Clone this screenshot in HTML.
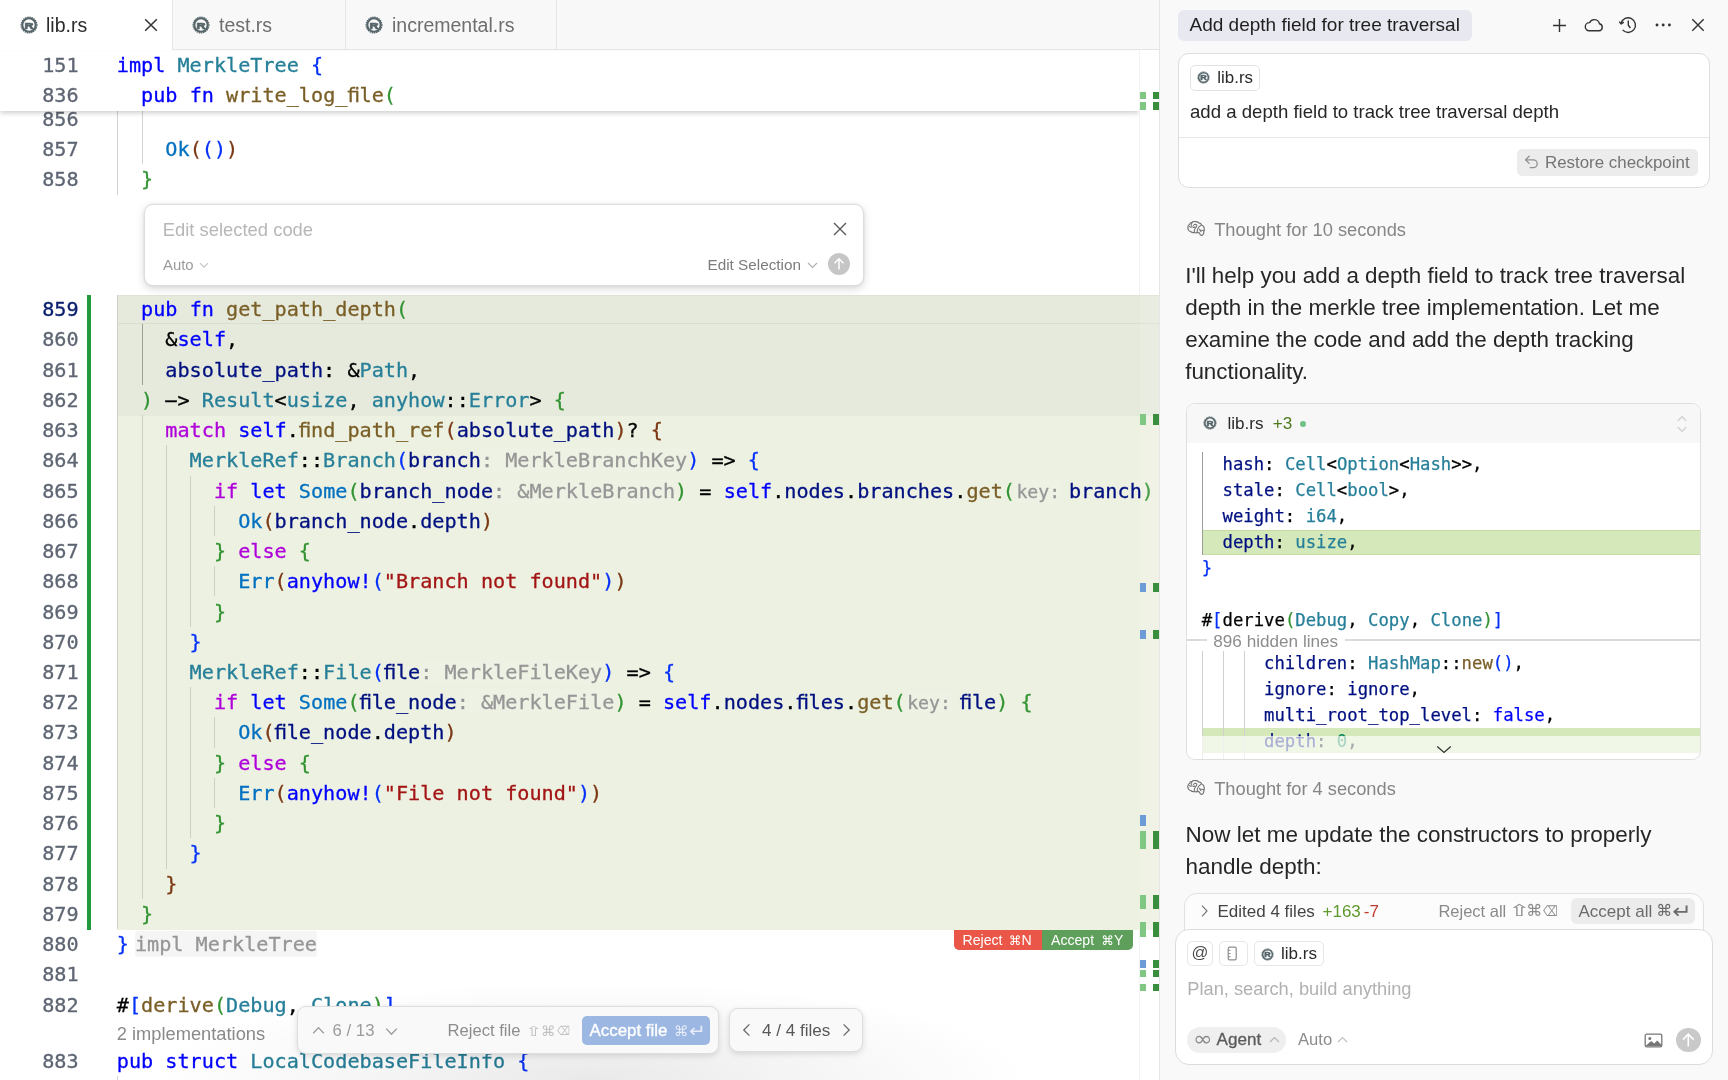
<!DOCTYPE html>
<html lang="en">
<head>
<meta charset="utf-8">
<title>lib.rs</title>
<style>
*{box-sizing:border-box;margin:0;padding:0}
html,body{width:1728px;height:1080px;overflow:hidden;background:#fff}
body{font-family:"Liberation Sans",Arial,sans-serif;color:#222;position:relative}
.abs{position:absolute}
#editor,#panel{will-change:transform}
#editor{position:absolute;left:0;top:0;width:1160px;height:1080px;background:#fff;overflow:hidden;border-right:1px solid #e6e6e6}
#tabs{position:absolute;left:0;top:0;width:1160px;height:50px;background:#f8f8f8;border-bottom:1px solid #e4e4e4}
.tab{position:absolute;top:0;height:49px;border-right:1px solid #e6e6e6;font-size:19.5px;color:#6e6e6e;line-height:50px;white-space:nowrap}
.tab.active{background:#fff;height:49.6px;color:#2b2b2b}
.tab .lbl{position:absolute;top:0}
.mono{font-family:"DejaVu Sans Mono","Liberation Mono",monospace}
.cl{font-feature-settings:"dlig" 1;-webkit-text-stroke:0.3px;position:absolute;left:0;width:1139px;height:30.24px;line-height:30.24px;font-size:20.16px;white-space:pre;font-family:"DejaVu Sans Mono","Liberation Mono",monospace;color:#000}
.ln{position:absolute;left:0;width:78.6px;text-align:right;color:#5f6673}
.ln.cur{color:#0b216f}
.code{position:absolute;left:116.8px;top:0}
.k{color:#0000ff}.c{color:#af00db}.t{color:#267f99}.f{color:#795e26}.v{color:#001080}.s{color:#a31515}.e{color:#0070c1}.n{color:#098658}
.b1{color:#0431fa}.b2{color:#319331}.b3{color:#7b3814}
.h{color:#969696;background:rgba(255,255,255,.1);padding:0;border-radius:3px}
.hp{color:#969696;background:rgba(255,255,255,.1);font-size:18.14px;padding:1px 1.5px;margin:0 7.4px 0 0;border-radius:4px}
.hb{color:#969696;background:#f5f5f5;padding:1px 0;margin-left:6px;border-radius:3px}
.ig{position:absolute;width:1px;background:#d3d3d3}
.om{position:absolute;width:6.5px}
.pc{position:absolute;left:14.4px;height:25.92px;line-height:25.92px;font-size:17.28px;white-space:pre;font-family:"DejaVu Sans Mono","Liberation Mono",monospace;color:#000;font-feature-settings:"dlig" 1;-webkit-text-stroke:0.25px}
.ar{display:inline-block;transform:scaleX(2.14);transform-origin:6.09px 50%}
.sym{font-family:"DejaVu Sans","Liberation Sans",sans-serif}
</style>
</head>
<body>
<div id="editor">
<div class="abs" style="left:116.8px;top:295.2px;width:1043px;height:634.7px;background:#edf1e1"></div>
<div class="abs" style="left:116.8px;top:295.2px;width:1043px;height:120.7px;background:#e6eadc"></div>
<div class="abs" style="left:116.8px;top:295.2px;width:1043px;height:29.2px;border-top:1px solid #dfe3d5;border-bottom:1px solid #dadecf"></div>
<div class="abs" style="left:86.5px;top:295px;width:4px;height:634.5px;background:#219a3d"></div>
<div class="ig" style="left:117.3px;top:103.92px;height:90.72px;background:#d3d3d3"></div>
<div class="ig" style="left:141.6px;top:103.92px;height:60.48px;background:#d3d3d3"></div>
<div class="ig" style="left:117.3px;top:295.20px;height:633.94px;background:#cdd0c4"></div>
<div class="ig" style="left:141.6px;top:324.34px;height:60.48px;background:#9da094"></div>
<div class="ig" style="left:141.6px;top:415.06px;height:483.84px;background:#cdd0c4"></div>
<div class="ig" style="left:165.8px;top:445.30px;height:423.36px;background:#cdd0c4"></div>
<div class="ig" style="left:190.1px;top:475.54px;height:151.20px;background:#cdd0c4"></div>
<div class="ig" style="left:214.4px;top:505.78px;height:30.24px;background:#cdd0c4"></div>
<div class="ig" style="left:214.4px;top:566.26px;height:30.24px;background:#cdd0c4"></div>
<div class="ig" style="left:190.1px;top:687.22px;height:151.20px;background:#cdd0c4"></div>
<div class="ig" style="left:214.4px;top:717.46px;height:30.24px;background:#cdd0c4"></div>
<div class="ig" style="left:214.4px;top:777.94px;height:30.24px;background:#cdd0c4"></div>
<div class="cl" style="top:103.92px"><span class="ln">856</span><span class="code"></span></div>
<div class="cl" style="top:134.16px"><span class="ln">857</span><span class="code">    <span class="e">Ok</span><span class="b3">(</span><span class="b1">()</span><span class="b3">)</span></span></div>
<div class="cl" style="top:164.40px"><span class="ln">858</span><span class="code">  <span class="b2">}</span></span></div>
<div class="cl" style="top:294.10px"><span class="ln cur">859</span><span class="code">  <span class="k">pub</span> <span class="k">fn</span> <span class="f">get_path_depth</span><span class="b2">(</span></span></div>
<div class="cl" style="top:324.34px"><span class="ln">860</span><span class="code">    &amp;<span class="k">self</span>,</span></div>
<div class="cl" style="top:354.58px"><span class="ln">861</span><span class="code">    <span class="v">absolute_path</span>: &amp;<span class="t">Path</span>,</span></div>
<div class="cl" style="top:384.82px"><span class="ln">862</span><span class="code">  <span class="b2">)</span> <span class="ar">-</span>&gt; <span class="t">Result</span>&lt;<span class="t">usize</span>, <span class="t">anyhow</span>::<span class="t">Error</span>&gt; <span class="b2">{</span></span></div>
<div class="cl" style="top:415.06px"><span class="ln">863</span><span class="code">    <span class="c">match</span> <span class="k">self</span>.<span class="f">find_path_ref</span><span class="b3">(</span><span class="v">absolute_path</span><span class="b3">)</span>? <span class="b3">{</span></span></div>
<div class="cl" style="top:445.30px"><span class="ln">864</span><span class="code">      <span class="t">MerkleRef</span>::<span class="t">Branch</span><span class="b1">(</span><span class="v">branch</span><span class="h">: MerkleBranchKey</span><span class="b1">)</span> =&gt; <span class="b1">{</span></span></div>
<div class="cl" style="top:475.54px"><span class="ln">865</span><span class="code">        <span class="c">if</span> <span class="k">let</span> <span class="e">Some</span><span class="b2">(</span><span class="v">branch_node</span><span class="h">: &amp;MerkleBranch</span><span class="b2">)</span> = <span class="k">self</span>.<span class="v">nodes</span>.<span class="v">branches</span>.<span class="f">get</span><span class="b2">(</span><span class="hp">key:</span><span class="v">branch</span><span class="b2">)</span> <span class="b2">{</span></span></div>
<div class="cl" style="top:505.78px"><span class="ln">866</span><span class="code">          <span class="e">Ok</span><span class="b3">(</span><span class="v">branch_node</span>.<span class="v">depth</span><span class="b3">)</span></span></div>
<div class="cl" style="top:536.02px"><span class="ln">867</span><span class="code">        <span class="b2">}</span> <span class="c">else</span> <span class="b2">{</span></span></div>
<div class="cl" style="top:566.26px"><span class="ln">868</span><span class="code">          <span class="e">Err</span><span class="b3">(</span><span class="k">anyhow!</span><span class="b1">(</span><span class="s">"Branch not found"</span><span class="b1">)</span><span class="b3">)</span></span></div>
<div class="cl" style="top:596.50px"><span class="ln">869</span><span class="code">        <span class="b2">}</span></span></div>
<div class="cl" style="top:626.74px"><span class="ln">870</span><span class="code">      <span class="b1">}</span></span></div>
<div class="cl" style="top:656.98px"><span class="ln">871</span><span class="code">      <span class="t">MerkleRef</span>::<span class="t">File</span><span class="b1">(</span><span class="v">file</span><span class="h">: MerkleFileKey</span><span class="b1">)</span> =&gt; <span class="b1">{</span></span></div>
<div class="cl" style="top:687.22px"><span class="ln">872</span><span class="code">        <span class="c">if</span> <span class="k">let</span> <span class="e">Some</span><span class="b2">(</span><span class="v">file_node</span><span class="h">: &amp;MerkleFile</span><span class="b2">)</span> = <span class="k">self</span>.<span class="v">nodes</span>.<span class="v">files</span>.<span class="f">get</span><span class="b2">(</span><span class="hp">key:</span><span class="v">file</span><span class="b2">)</span> <span class="b2">{</span></span></div>
<div class="cl" style="top:717.46px"><span class="ln">873</span><span class="code">          <span class="e">Ok</span><span class="b3">(</span><span class="v">file_node</span>.<span class="v">depth</span><span class="b3">)</span></span></div>
<div class="cl" style="top:747.70px"><span class="ln">874</span><span class="code">        <span class="b2">}</span> <span class="c">else</span> <span class="b2">{</span></span></div>
<div class="cl" style="top:777.94px"><span class="ln">875</span><span class="code">          <span class="e">Err</span><span class="b3">(</span><span class="k">anyhow!</span><span class="b1">(</span><span class="s">"File not found"</span><span class="b1">)</span><span class="b3">)</span></span></div>
<div class="cl" style="top:808.18px"><span class="ln">876</span><span class="code">        <span class="b2">}</span></span></div>
<div class="cl" style="top:838.42px"><span class="ln">877</span><span class="code">      <span class="b1">}</span></span></div>
<div class="cl" style="top:868.66px"><span class="ln">878</span><span class="code">    <span class="b3">}</span></span></div>
<div class="cl" style="top:898.90px"><span class="ln">879</span><span class="code">  <span class="b2">}</span></span></div>
<div class="cl" style="top:929.14px"><span class="ln">880</span><span class="code"><span class="b1">}</span><span class="hb">impl MerkleTree</span></span></div>
<div class="cl" style="top:959.38px"><span class="ln">881</span><span class="code"></span></div>
<div class="cl" style="top:989.62px"><span class="ln">882</span><span class="code">#<span class="b1">[</span><span class="f">derive</span><span class="b2">(</span><span class="t">Debug</span>, <span class="t">Clone</span><span class="b2">)</span><span class="b1">]</span></span></div>
<div class="abs" style="left:116.8px;top:1020.6px;font-size:18.3px;color:#8a8a8a;line-height:26px;white-space:nowrap">2 implementations</div>
<div class="cl" style="top:1045.95px"><span class="ln">883</span><span class="code"><span class="k">pub</span> <span class="k">struct</span> <span class="t">LocalCodebaseFileInfo</span> <span class="b1">{</span></span></div>
<div class="ig" style="left:117.3px;top:1076.2px;height:4px"></div>
<div class="abs" style="left:0;top:50.4px;width:1139px;height:60.8px;background:#fff;box-shadow:0 2px 5px rgba(0,0,0,.2);clip-path:inset(0 0 -12px 0)"></div>
<div class="cl" style="top:50.4px"><span class="ln">151</span><span class="code"><span class="k">impl</span> <span class="t">MerkleTree</span> <span class="b1">{</span></span></div>
<div class="cl" style="top:80.0px"><span class="ln">836</span><span class="code">  <span class="k">pub</span> <span class="k">fn</span> <span class="f">write_log_file</span><span class="b2">(</span></span></div>
<div class="abs" style="left:1139px;top:50px;width:1px;height:245px;background:rgba(0,0,0,.05)"></div>
<div class="abs" style="left:1139px;top:930px;width:1px;height:150px;background:rgba(0,0,0,.05)"></div>
<div class="abs" style="left:1139.5px;top:295.2px;width:20px;height:634.7px;background:rgba(255,255,255,.12)"></div>
<div class="om" style="left:1139.5px;top:91.6px;height:7.4px;background:#81c784"></div>
<div class="om" style="left:1152.5px;top:91.6px;height:7.4px;background:#388e3c"></div>
<div class="om" style="left:1139.5px;top:102.2px;height:7.8px;background:#81c784"></div>
<div class="om" style="left:1152.5px;top:102.2px;height:7.8px;background:#388e3c"></div>
<div class="om" style="left:1139.5px;top:414.0px;height:11.0px;background:#81c784"></div>
<div class="om" style="left:1152.5px;top:414.0px;height:11.0px;background:#388e3c"></div>
<div class="om" style="left:1139.5px;top:583.0px;height:9.0px;background:#6c9bd6"></div>
<div class="om" style="left:1152.5px;top:583.0px;height:9.0px;background:#388e3c"></div>
<div class="om" style="left:1139.5px;top:630.0px;height:9.0px;background:#6c9bd6"></div>
<div class="om" style="left:1152.5px;top:630.0px;height:9.0px;background:#388e3c"></div>
<div class="om" style="left:1139.5px;top:815.0px;height:11.0px;background:#6c9bd6"></div>
<div class="om" style="left:1139.5px;top:831.0px;height:18.0px;background:#81c784"></div>
<div class="om" style="left:1152.5px;top:831.0px;height:18.0px;background:#388e3c"></div>
<div class="om" style="left:1139.5px;top:895.0px;height:14.0px;background:#81c784"></div>
<div class="om" style="left:1152.5px;top:895.0px;height:14.0px;background:#388e3c"></div>
<div class="om" style="left:1139.5px;top:922.0px;height:15.0px;background:#81c784"></div>
<div class="om" style="left:1152.5px;top:922.0px;height:15.0px;background:#388e3c"></div>
<div class="om" style="left:1139.5px;top:960.0px;height:8.0px;background:#6c9bd6"></div>
<div class="om" style="left:1152.5px;top:960.0px;height:8.0px;background:#388e3c"></div>
<div class="om" style="left:1139.5px;top:970.0px;height:7.0px;background:#81c784"></div>
<div class="om" style="left:1152.5px;top:970.0px;height:7.0px;background:#388e3c"></div>
<div class="om" style="left:1139.5px;top:984.0px;height:7.0px;background:#81c784"></div>
<div class="om" style="left:1152.5px;top:984.0px;height:7.0px;background:#388e3c"></div>
<!-- inline edit box -->
<div class="abs" style="left:144.4px;top:204.4px;width:719.4px;height:82px;background:#fff;border:1px solid #dedede;border-radius:9px;box-shadow:0 3px 9px rgba(0,0,0,.15),0 0 3px rgba(0,0,0,.08)">
  <div class="abs" style="left:17.4px;top:11.6px;font-size:18.4px;line-height:26px;color:#b7b7b7;white-space:nowrap">Edit selected code</div>
  <svg class="abs" style="left:687.6px;top:16.6px" width="14" height="14" viewBox="0 0 14 14"><path d="M1 1 L13 13 M13 1 L1 13" stroke="#5a5a5a" stroke-width="1.4" fill="none"/></svg>
  <div class="abs" style="left:17.6px;top:49.6px;font-size:14.9px;line-height:20px;color:#9a9a9a;white-space:nowrap">Auto</div>
  <svg class="abs" style="left:53.6px;top:56.6px" width="10" height="7" viewBox="0 0 10 7"><path d="M1 1.2 L5 5.2 L9 1.2" stroke="#c4c4c4" stroke-width="1.2" fill="none"/></svg>
  <div class="abs" style="left:562.1px;top:49.6px;font-size:15.3px;line-height:20px;color:#7c7c7c;white-space:nowrap">Edit Selection</div>
  <svg class="abs" style="left:662.1px;top:56.6px" width="11" height="7" viewBox="0 0 11 7"><path d="M1 1 L5.5 5.5 L10 1" stroke="#b0b0b0" stroke-width="1.2" fill="none"/></svg>
  <div class="abs" style="left:682.6px;top:47.6px;width:22px;height:22px;border-radius:11px;background:#c6c6c6">
    <svg class="abs" style="left:0;top:0" width="22" height="22" viewBox="0 0 22 22"><path d="M11 16.5 V6 M6.5 10.3 L11 5.8 L15.5 10.3" stroke="#fff" stroke-width="1.5" fill="none"/></svg>
  </div>
</div>

<!-- reject / accept hunk -->
<div class="abs" style="left:953.5px;top:929.8px;width:88.5px;height:20.5px;background:#ea5648;border-radius:0 0 0 5px;color:#fff;font-size:14.1px;line-height:20px;white-space:nowrap"><span class="abs" style="left:9px;top:0">Reject</span><span class="abs" style="left:55.5px;top:0"><span class="sym" style="font-size:12.5px">⌘</span>N</span></div>
<div class="abs" style="left:1042px;top:929.8px;width:91px;height:20.5px;background:#5e9f5b;border-radius:0 0 5px 0;color:#fff;font-size:14.1px;line-height:20px;white-space:nowrap"><span class="abs" style="left:9px;top:0">Accept</span><span class="abs" style="left:59.5px;top:0"><span class="sym" style="font-size:12.5px">⌘</span>Y</span></div>

<!-- bottom gradient -->
<div class="abs" style="left:0;top:960px;width:1139px;height:120px;background:radial-gradient(ellipse 440px 100px at 590px 120px, rgba(0,0,0,.085), rgba(0,0,0,.04) 50%, rgba(0,0,0,0) 100%);pointer-events:none"></div>

<!-- floating review bar -->
<div class="abs" style="left:296.5px;top:1006px;width:422px;height:47.5px;background:#f9f9f9;border:1px solid #dedede;border-radius:9px;box-shadow:0 2px 6px rgba(0,0,0,.13)">
  <svg class="abs" style="left:14px;top:19.3px" width="13" height="9" viewBox="0 0 13 9"><path d="M1.2 7.2 L6.5 1.6 L11.8 7.2" stroke="#9a9a9a" stroke-width="1.3" fill="none"/></svg>
  <div class="abs" style="left:35px;top:12.2px;font-size:16.8px;line-height:24px;color:#9b9b9b;white-space:nowrap">6 / 13</div>
  <svg class="abs" style="left:87px;top:20px" width="13" height="9" viewBox="0 0 13 9"><path d="M1.2 1.6 L6.5 7.2 L11.8 1.6" stroke="#9a9a9a" stroke-width="1.3" fill="none"/></svg>
  <div class="abs" style="left:150px;top:12.2px;font-size:16.6px;line-height:24px;color:#8c8c8c;white-space:nowrap">Reject file</div>
  <div class="abs" style="left:284.5px;top:9px;width:127.5px;height:28.5px;border-radius:5px;background:#9bb7e2;color:#fff;white-space:nowrap">
    <span class="abs" style="left:7.5px;top:3.3px;font-size:16.9px;line-height:24px;-webkit-text-stroke:0.35px #fff">Accept file</span>
  </div>
</div>
<div class="abs" style="left:728.5px;top:1007.5px;width:134.5px;height:44.5px;background:#f9f9f9;border:1px solid #dedede;border-radius:9px;box-shadow:0 2px 6px rgba(0,0,0,.13)">
  <svg class="abs" style="left:12px;top:14.5px" width="9" height="14" viewBox="0 0 9 14"><path d="M7.4 1.4 L1.8 7 L7.4 12.6" stroke="#6a6a6a" stroke-width="1.3" fill="none"/></svg>
  <div class="abs" style="left:32.5px;top:10.5px;font-size:17.1px;line-height:24px;color:#585858;white-space:nowrap">4 / 4 files</div>
  <svg class="abs" style="left:112px;top:14.5px" width="9" height="14" viewBox="0 0 9 14"><path d="M1.6 1.4 L7.2 7 L1.6 12.6" stroke="#6a6a6a" stroke-width="1.3" fill="none"/></svg>
</div>
<!-- key glyphs -->
<span class="abs sym" style="left:525.38px;top:1018.93px;font-size:13.60px;line-height:24px;color:#c2c2c2;transform:scaleX(1.562);transform-origin:0 50%;white-space:nowrap">⇧</span><span class="abs sym" style="left:540.89px;top:1019.01px;font-size:14.21px;line-height:24px;color:#c2c2c2;transform:scaleX(1.000);transform-origin:0 50%;white-space:nowrap">⌘</span><span class="abs sym" style="left:556.91px;top:1018.96px;font-size:12.37px;line-height:24px;color:#c2c2c2;transform:scaleX(0.729);transform-origin:0 50%;white-space:nowrap">⌫</span><span class="abs sym" style="left:674.09px;top:1018.91px;font-size:14.21px;line-height:24px;color:rgba(255,255,255,.75);transform:scaleX(1.000);transform-origin:0 50%;white-space:nowrap">⌘</span><span class="abs sym" style="left:688.80px;top:1018.96px;font-size:18.08px;line-height:24px;color:rgba(255,255,255,.75);transform:scaleX(1.106);transform-origin:0 50%;white-space:nowrap">↵</span>

<div id="tabs">
  <div class="tab active" style="left:0;width:172.5px">
    <svg class="abs" style="left:19.5px;top:16px" width="18" height="18" viewBox="0 0 18 18"><circle cx="9" cy="9" r="7.9" fill="none" stroke="#55656a" stroke-width="1.2" stroke-dasharray="1.4 0.8"/><circle cx="9" cy="9" r="6.7" fill="none" stroke="#55656a" stroke-width="2.1"/><text transform="translate(9.1 12.5) scale(1.3 1)" x="0" y="0" font-family="Liberation Sans, sans-serif" font-size="9.6" font-weight="bold" text-anchor="middle" fill="#55656a" stroke="#55656a" stroke-width="0.7">R</text></svg>
    <span class="lbl" style="left:46px">lib.rs</span>
    <svg class="abs" style="left:143px;top:17px" width="16" height="16" viewBox="0 0 16 16"><path d="M2.2 2.2 L13.8 13.8 M13.8 2.2 L2.2 13.8" stroke="#333" stroke-width="1.5" fill="none"/></svg>
  </div>
  <div class="tab" style="left:172.5px;width:173px">
    <svg class="abs" style="left:19.5px;top:16px" width="18" height="18" viewBox="0 0 18 18"><circle cx="9" cy="9" r="7.9" fill="none" stroke="#55656a" stroke-width="1.2" stroke-dasharray="1.4 0.8"/><circle cx="9" cy="9" r="6.7" fill="none" stroke="#55656a" stroke-width="2.1"/><text transform="translate(9.1 12.5) scale(1.3 1)" x="0" y="0" font-family="Liberation Sans, sans-serif" font-size="9.6" font-weight="bold" text-anchor="middle" fill="#55656a" stroke="#55656a" stroke-width="0.7">R</text></svg>
    <span class="lbl" style="left:46.5px">test.rs</span>
  </div>
  <div class="tab" style="left:345.5px;width:211px">
    <svg class="abs" style="left:19.5px;top:16px" width="18" height="18" viewBox="0 0 18 18"><circle cx="9" cy="9" r="7.9" fill="none" stroke="#55656a" stroke-width="1.2" stroke-dasharray="1.4 0.8"/><circle cx="9" cy="9" r="6.7" fill="none" stroke="#55656a" stroke-width="2.1"/><text transform="translate(9.1 12.5) scale(1.3 1)" x="0" y="0" font-family="Liberation Sans, sans-serif" font-size="9.6" font-weight="bold" text-anchor="middle" fill="#55656a" stroke="#55656a" stroke-width="0.7">R</text></svg>
    <span class="lbl" style="left:46.5px">incremental.rs</span>
  </div>
</div>

</div>
<div id="panel" class="abs" style="left:1160px;top:0;width:568px;height:1080px;background:#f9f9f9;overflow:hidden">
<!-- coordinates inside are panel-relative: x = X-1160 -->

<!-- title chip -->
<div class="abs" style="left:17.5px;top:9.5px;width:294px;height:31.5px;border-radius:6px;background:#e8e8f0"></div>
<div class="abs" style="left:29.5px;top:12px;font-size:19px;line-height:26px;color:#1f1f1f;white-space:nowrap">Add depth field for tree traversal</div>

<!-- header icons -->
<svg class="abs" style="left:392px;top:18px" width="15" height="15" viewBox="0 0 15 15"><path d="M7.5 1 V14 M1 7.5 H14" stroke="#333" stroke-width="1.4" fill="none"/></svg>
<svg class="abs" style="left:423px;top:16px" width="22" height="18" viewBox="0 0 22 18"><path d="M6.2 14.8 H16 A3.6 3.6 0 0 0 16.4 7.7 A5.2 5.2 0 0 0 6.6 6.6 A4.1 4.1 0 0 0 6.2 14.8 Z" stroke="#333" stroke-width="1.4" fill="none" stroke-linejoin="round"/></svg>
<svg class="abs" style="left:458px;top:15px" width="20" height="20" viewBox="0 0 20 20"><path d="M3.1 8.2 A7.3 7.3 0 1 1 4.6 14.9" stroke="#333" stroke-width="1.4" fill="none"/><path d="M1.2 6.6 L3.2 9 L5.8 7.2" stroke="#333" stroke-width="1.4" fill="none" stroke-linejoin="round"/><path d="M10.3 5.6 V10.2 L12.4 13" stroke="#333" stroke-width="1.4" fill="none"/></svg>
<svg class="abs" style="left:494px;top:22px" width="18" height="6" viewBox="0 0 18 6"><circle cx="3" cy="3" r="1.45" fill="#333"/><circle cx="9.2" cy="3" r="1.45" fill="#333"/><circle cx="15.4" cy="3" r="1.45" fill="#333"/></svg>
<svg class="abs" style="left:530.5px;top:18px" width="14" height="14" viewBox="0 0 14 14"><path d="M1.3 1.3 L12.7 12.7 M12.7 1.3 L1.3 12.7" stroke="#333" stroke-width="1.4" fill="none"/></svg>

<!-- user message card -->
<div class="abs" style="left:18px;top:52.5px;width:532px;height:135.5px;background:#fff;border:1px solid #dedede;border-radius:11px"></div>
<div class="abs" style="left:19px;top:136.5px;width:530px;height:1px;background:#e6e6e6"></div>
<div class="abs" style="left:30px;top:64.5px;width:70px;height:26px;border:1px solid #e3e3e3;border-radius:5px;background:#fff"></div>
<svg class="abs" style="left:36.5px;top:71px" width="13" height="13" viewBox="0 0 18 18"><circle cx="9" cy="9" r="7.9" fill="none" stroke="#55656a" stroke-width="1.2" stroke-dasharray="1.4 0.8"/><circle cx="9" cy="9" r="6.7" fill="none" stroke="#55656a" stroke-width="2.1"/><text transform="translate(9.1 12.5) scale(1.3 1)" x="0" y="0" font-family="Liberation Sans, sans-serif" font-size="9.6" font-weight="bold" text-anchor="middle" fill="#55656a" stroke="#55656a" stroke-width="0.7">R</text></svg>
<div class="abs" style="left:57.3px;top:65.5px;font-size:16.9px;line-height:24px;color:#2a2a2a;white-space:nowrap">lib.rs</div>
<div class="abs" style="left:30px;top:99px;font-size:18.6px;line-height:26px;color:#262626;white-space:nowrap">add a depth field to track tree traversal depth</div>
<div class="abs" style="left:357px;top:149px;width:181px;height:27px;border-radius:5px;background:#ececec"></div>
<svg class="abs" style="left:363.8px;top:154.2px" width="15" height="15" viewBox="0 0 15 15"><path d="M5.2 2.2 L1.6 5.8 L5.2 9.4" stroke="#909090" stroke-width="1.3" fill="none" stroke-linejoin="round" stroke-linecap="round"/><path d="M1.8 5.8 H9.3 A3.9 3.9 0 0 1 9.3 13.6 H6.2" stroke="#909090" stroke-width="1.3" fill="none" stroke-linecap="round"/></svg>
<div class="abs" style="left:385px;top:151.1px;font-size:16.9px;line-height:24px;color:#747474;white-space:nowrap">Restore checkpoint</div>

<!-- thought 1 -->
<svg class="abs" style="left:26.5px;top:220.5px" width="19" height="16" viewBox="0 0 19 16"><path d="M0.9 7.2 Q0.6 4.2 2.6 3.3 Q2.9 1.2 5.2 1.3 Q6.6 0.1 8.4 0.7 Q10.6 0.5 11.6 1.9 Q14 2.2 14.9 4.2 Q17.3 5 17.1 7.4 Q17.6 9.2 16.8 10.6 Q17 13.2 15.4 14.2 Q13.6 14.8 12.8 13 Q12.6 11.6 11.2 11.4 Q9.4 12.2 7.4 11.5 Q5 11.8 3.6 10.5 Q1.2 10 0.9 7.2 Z" stroke="#747474" stroke-width="1.2" fill="none" stroke-linejoin="round"/><path d="M5 2.2 Q3.6 3.4 4.4 4.6 M2.4 5.6 Q3.6 6.6 5.2 5.8 M6.4 4.6 Q7 3.2 8.6 3.2 Q10.4 3.6 9.6 5.4 Q8.2 7.2 7.6 8.4 Q7.2 9.8 7.4 11 M6.2 6.4 Q7 6.6 7.6 6 M13.8 4.6 Q12 5.4 11 7.4 Q10 9.2 10.2 11 M13 9.4 Q14.6 9 16.4 9.6 M12.6 8.4 Q12.8 9.6 14 10.6" stroke="#747474" stroke-width="1.1" fill="none" stroke-linecap="round"/></svg>
<div class="abs" style="left:54.2px;top:216.5px;font-size:18.25px;line-height:26px;color:#868686;white-space:nowrap">Thought for 10 seconds</div>

<!-- paragraph 1 -->
<div class="abs" style="left:25.2px;top:260.2px;font-size:22.42px;line-height:32px;color:#262626;white-space:nowrap">I'll help you add a depth field to track tree traversal<br>depth in the merkle tree implementation. Let me<br>examine the code and add the depth tracking<br>functionality.</div>

<!-- code block card -->
<div class="abs" style="left:26.3px;top:403px;width:515px;height:357px;background:#fff;border:1px solid #dfdfdf;border-radius:9px;overflow:hidden">
  <!-- inner coords relative to card border box (minus 1px border): cx = X-1160-27.3, cy = Y-404 -->
  <div class="abs" style="left:0;top:0;width:513px;height:38.6px;background:#f7f7f7"></div>
  <svg class="abs" style="left:16.2px;top:11.8px" width="14" height="14" viewBox="0 0 18 18"><circle cx="9" cy="9" r="7.9" fill="none" stroke="#55656a" stroke-width="1.2" stroke-dasharray="1.4 0.8"/><circle cx="9" cy="9" r="6.7" fill="none" stroke="#55656a" stroke-width="2.1"/><text transform="translate(9.1 12.5) scale(1.3 1)" x="0" y="0" font-family="Liberation Sans, sans-serif" font-size="9.6" font-weight="bold" text-anchor="middle" fill="#55656a" stroke="#55656a" stroke-width="0.7">R</text></svg>
  <div class="abs" style="left:40.1px;top:8.2px;font-size:17.1px;line-height:24px;color:#2a2a2a;white-space:nowrap">lib.rs</div>
  <div class="abs" style="left:85.5px;top:8.2px;font-size:17.1px;line-height:24px;color:#4d7a1c;white-space:nowrap">+3</div>
  <div class="abs" style="left:112.7px;top:16.5px;width:6px;height:6px;border-radius:3px;background:#6fc285"></div>
  <svg class="abs" style="left:489px;top:9.5px" width="12" height="20" viewBox="0 0 12 20"><path d="M1.8 7 L6 2.6 L10.2 7 M1.8 13 L6 17.4 L10.2 13" stroke="#cfcfcf" stroke-width="1.3" fill="none"/></svg>

  <!-- highlight rows -->
  <div class="abs" style="left:14.7px;top:125.7px;width:498.3px;height:25.6px;background:#d5e8ba;border-top:1px solid #c5dba6;border-bottom:1px solid #c5dba6"></div>
  <div class="abs" style="left:14.7px;top:323.6px;width:498.3px;height:25.6px;background:#d5e8ba"></div>
  <!-- guides -->
  <div class="abs" style="left:14.4px;top:47.8px;width:1.6px;height:103.5px;background:#9d9d9d"></div>
  <div class="abs" style="left:14.7px;top:246.5px;width:1.2px;height:112px;background:#d0d0d0"></div>
  <div class="abs" style="left:35.6px;top:246.5px;width:1.2px;height:112px;background:#d0d0d0"></div>
  <div class="abs" style="left:56.4px;top:246.5px;width:1.2px;height:112px;background:#d0d0d0"></div>

  <div class="pc" style="top:48.20px">  <span class="v">hash</span>: <span class="t">Cell</span>&lt;<span class="t">Option</span>&lt;<span class="t">Hash</span>&gt;&gt;,</div>
  <div class="pc" style="top:74.12px">  <span class="v">stale</span>: <span class="t">Cell</span>&lt;<span class="t">bool</span>&gt;,</div>
  <div class="pc" style="top:100.04px">  <span class="v">weight</span>: <span class="t">i64</span>,</div>
  <div class="pc" style="top:125.96px">  <span class="v">depth</span>: <span class="t">usize</span>,</div>
  <div class="pc" style="top:151.88px"><span class="b1">}</span></div>
  <div class="pc" style="top:203.72px">#<span class="b1">[</span>derive<span class="b2">(</span><span class="t">Debug</span>, <span class="t">Copy</span>, <span class="t">Clone</span><span class="b2">)</span><span class="b1">]</span></div>

  <!-- hidden lines separator -->
  <div class="abs" style="left:0;top:235.4px;width:20px;height:1.6px;background:#dadada"></div>
  <div class="abs" style="left:158px;top:235.4px;width:355px;height:1.6px;background:#dadada"></div>
  <div class="abs" style="left:26px;top:225px;font-size:17.15px;line-height:24px;color:#8d8d8d;white-space:nowrap">896 hidden lines</div>

  <div class="pc" style="top:247.10px">      <span class="v">children</span>: <span class="t">HashMap</span>::<span class="f">new</span><span class="b1">()</span>,</div>
  <div class="pc" style="top:272.90px">      <span class="v">ignore</span>: <span class="v">ignore</span>,</div>
  <div class="pc" style="top:298.70px">      <span class="v">multi_root_top_level</span>: <span class="k">false</span>,</div>
  <div class="pc" style="top:324.50px">      <span class="v">depth</span>: <span class="n">0</span>,</div>

  <!-- fade -->
  <div class="abs" style="left:0;top:331.8px;width:513px;height:25px;background:rgba(255,255,255,.66)"></div>
  <svg class="abs" style="left:249px;top:340.5px" width="16" height="9" viewBox="0 0 16 9"><path d="M1.2 1.4 L8 7.4 L14.8 1.4" stroke="#333" stroke-width="1.3" fill="none"/></svg>
</div>


<!-- thought 2 -->
<svg class="abs" style="left:26.5px;top:779.5px" width="19" height="16" viewBox="0 0 19 16"><path d="M0.9 7.2 Q0.6 4.2 2.6 3.3 Q2.9 1.2 5.2 1.3 Q6.6 0.1 8.4 0.7 Q10.6 0.5 11.6 1.9 Q14 2.2 14.9 4.2 Q17.3 5 17.1 7.4 Q17.6 9.2 16.8 10.6 Q17 13.2 15.4 14.2 Q13.6 14.8 12.8 13 Q12.6 11.6 11.2 11.4 Q9.4 12.2 7.4 11.5 Q5 11.8 3.6 10.5 Q1.2 10 0.9 7.2 Z" stroke="#747474" stroke-width="1.2" fill="none" stroke-linejoin="round"/><path d="M5 2.2 Q3.6 3.4 4.4 4.6 M2.4 5.6 Q3.6 6.6 5.2 5.8 M6.4 4.6 Q7 3.2 8.6 3.2 Q10.4 3.6 9.6 5.4 Q8.2 7.2 7.6 8.4 Q7.2 9.8 7.4 11 M6.2 6.4 Q7 6.6 7.6 6 M13.8 4.6 Q12 5.4 11 7.4 Q10 9.2 10.2 11 M13 9.4 Q14.6 9 16.4 9.6 M12.6 8.4 Q12.8 9.6 14 10.6" stroke="#747474" stroke-width="1.1" fill="none" stroke-linecap="round"/></svg>
<div class="abs" style="left:54.2px;top:775.8px;font-size:18.25px;line-height:26px;color:#868686;white-space:nowrap">Thought for 4 seconds</div>

<!-- paragraph 2 -->
<div class="abs" style="left:25.6px;top:818.5px;font-size:22.48px;line-height:32px;color:#262626;white-space:nowrap">Now let me update the constructors to properly<br>handle depth:</div>

<!-- edited files bar -->
<div class="abs" style="left:23.7px;top:892.5px;width:520.5px;height:60px;background:#fcfcfc;border:1px solid #e1e1e1;border-radius:13px"></div>
<svg class="abs" style="left:39.5px;top:904px" width="9" height="14" viewBox="0 0 9 14"><path d="M2 1.6 L7 7 L2 12.4" stroke="#777" stroke-width="1.2" fill="none"/></svg>
<div class="abs" style="left:57.5px;top:899.8px;font-size:17px;line-height:24px;color:#444;white-space:nowrap">Edited 4 files</div>
<div class="abs" style="left:162.5px;top:899.8px;font-size:17px;line-height:24px;color:#5f9a2c;white-space:nowrap">+163</div>
<div class="abs" style="left:203.8px;top:899.8px;font-size:17px;line-height:24px;color:#c23b30;white-space:nowrap">-7</div>
<div class="abs" style="left:278.4px;top:898.9px;font-size:16.5px;line-height:24px;color:#8b8b8b;white-space:nowrap">Reject all</div>
<div class="abs" style="left:411px;top:898px;width:124px;height:26px;border-radius:6px;background:#ececec"></div>
<div class="abs" style="left:418.5px;top:899.8px;font-size:17px;line-height:24px;color:#6b6b6b;white-space:nowrap">Accept all</div>

<!-- input box -->
<div class="abs" style="left:14.8px;top:929.3px;width:538.2px;height:135.5px;background:#fff;border:1px solid #dcdcdc;border-radius:14px"></div>
<div class="abs" style="left:27.3px;top:941px;width:25.5px;height:25px;border:1px solid #e6e6e6;border-radius:5px;background:#fff"></div>
<div class="abs" style="left:27.3px;top:941.2px;width:25.5px;text-align:center;font-size:16.6px;line-height:24px;color:#4a4a4a">@</div>
<div class="abs" style="left:59.2px;top:941px;width:28.8px;height:25px;border:1px solid #e6e6e6;border-radius:5px;background:#fff"></div>
<svg class="abs" style="left:66.3px;top:945.7px" width="12" height="15" viewBox="0 0 12 15"><path d="M3.6 1.2 H8.8 Q10.2 1.2 10.2 2.6 V12.4 Q10.2 13.8 8.8 13.8 H3.6 Q2.2 13.8 2.2 12.4 V2.6 Q2.2 1.2 3.6 1.2 Z" stroke="#8d8d8d" stroke-width="1.2" fill="none" stroke-linejoin="round"/><path d="M2.2 4.3 H4.6 M2.2 7.5 H4.6 M2.2 10.7 H4.6" stroke="#8d8d8d" stroke-width="1.1" fill="none"/></svg>
<div class="abs" style="left:94.3px;top:941px;width:70px;height:25px;border:1px solid #e6e6e6;border-radius:5px;background:#fff"></div>
<svg class="abs" style="left:100.5px;top:947.8px" width="13" height="13" viewBox="0 0 18 18"><circle cx="9" cy="9" r="7.9" fill="none" stroke="#55656a" stroke-width="1.2" stroke-dasharray="1.4 0.8"/><circle cx="9" cy="9" r="6.7" fill="none" stroke="#55656a" stroke-width="2.1"/><text transform="translate(9.1 12.5) scale(1.3 1)" x="0" y="0" font-family="Liberation Sans, sans-serif" font-size="9.6" font-weight="bold" text-anchor="middle" fill="#55656a" stroke="#55656a" stroke-width="0.7">R</text></svg>
<div class="abs" style="left:121px;top:942.4px;font-size:17.1px;line-height:24px;color:#2a2a2a;white-space:nowrap">lib.rs</div>
<div class="abs" style="left:27.3px;top:975.5px;font-size:18.25px;line-height:26px;color:#b1b1b1;white-space:nowrap">Plan, search, build anything</div>
<div class="abs" style="left:27.3px;top:1027.3px;width:98.6px;height:25.5px;border-radius:13px;background:#efefef"></div>
<div class="abs" style="left:56.5px;top:1028px;font-size:17.1px;line-height:24px;color:#5a5a5a;white-space:nowrap;-webkit-text-stroke:0.3px #5a5a5a">Agent</div>
<svg class="abs" style="left:108.5px;top:1035.5px" width="11" height="7" viewBox="0 0 11 7"><path d="M1 6 L5.5 1.5 L10 6" stroke="#b5b5b5" stroke-width="1.2" fill="none"/></svg>
<div class="abs" style="left:138px;top:1028px;font-size:16.6px;line-height:24px;color:#8c8c8c;white-space:nowrap">Auto</div>
<svg class="abs" style="left:176.5px;top:1035.5px" width="11" height="7" viewBox="0 0 11 7"><path d="M1 6 L5.5 1.5 L10 6" stroke="#c0c0c0" stroke-width="1.2" fill="none"/></svg>
<svg class="abs" style="left:484px;top:1033px" width="19" height="15" viewBox="0 0 19 15"><rect x="1.2" y="1.2" width="16.6" height="12.6" rx="1.6" stroke="#777" stroke-width="1.3" fill="none"/><circle cx="5.8" cy="5.4" r="1.5" fill="#777"/><path d="M2 12.6 L7.2 8 L10.2 10.6 L13.2 7.6 L17.2 11.4 V13 H2 Z" fill="#777"/></svg>
<div class="abs" style="left:516px;top:1027.7px;width:24.6px;height:24.6px;border-radius:50%;background:#c9c9c9"></div>
<svg class="abs" style="left:516px;top:1027.7px" width="24.6" height="24.6" viewBox="0 0 24.6 24.6"><path d="M12.3 18.6 V6.6 M7 11.6 L12.3 6.2 L17.6 11.6" stroke="#fff" stroke-width="1.6" fill="none"/></svg>
<!-- key glyphs -->
<span class="abs sym" style="left:347.72px;top:899.29px;font-size:16.40px;line-height:24px;color:#8b8b8b;transform:scaleX(1.651);transform-origin:0 50%;white-space:nowrap">⇧</span><span class="abs sym" style="left:366.37px;top:899.37px;font-size:16.05px;line-height:24px;color:#8b8b8b;transform:scaleX(1.000);transform-origin:0 50%;white-space:nowrap">⌘</span><span class="abs sym" style="left:383.10px;top:899.30px;font-size:13.95px;line-height:24px;color:#8b8b8b;transform:scaleX(0.733);transform-origin:0 50%;white-space:nowrap">⌫</span><span class="abs sym" style="left:496.27px;top:899.37px;font-size:16.05px;line-height:24px;color:#6b6b6b;transform:scaleX(1.000);transform-origin:0 50%;white-space:nowrap">⌘</span><span class="abs sym" style="left:511.63px;top:899.48px;font-size:20.38px;line-height:24px;color:#6b6b6b;transform:scaleX(1.145);transform-origin:0 50%;white-space:nowrap">↵</span><span class="abs sym" style="left:32.81px;top:1026.62px;font-size:21.08px;line-height:24px;color:#8a8a8a;transform:scaleX(1.117);transform-origin:0 50%;white-space:nowrap">∞</span>
</div>

</body>
</html>
